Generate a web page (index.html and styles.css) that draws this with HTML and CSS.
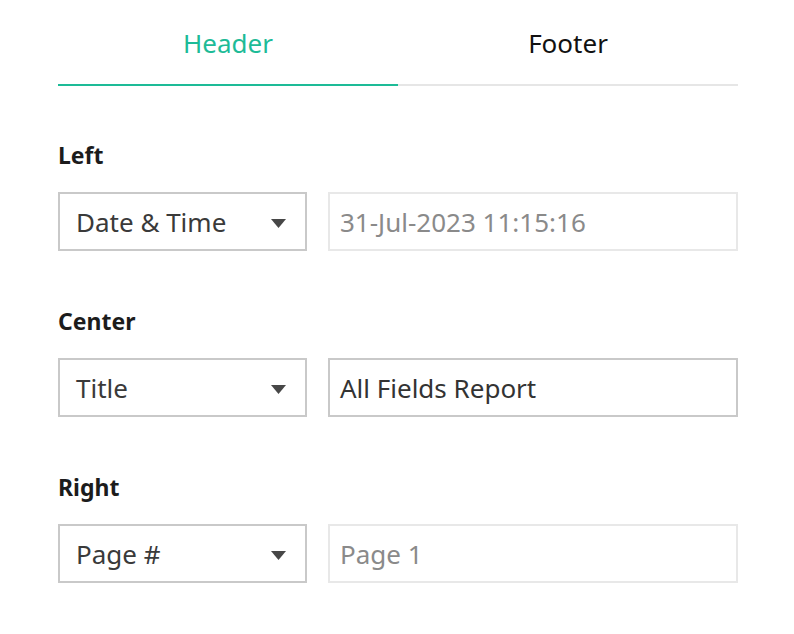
FILE: index.html
```html
<!DOCTYPE html>
<html lang="en">
<head>
<meta charset="utf-8">
<title>Header / Footer</title>
<link rel="stylesheet" href="styles.css">
</head>
<body>
<div class="panel">
  <div class="tabs">
    <div class="tab active">Header</div>
    <div class="tab">Footer</div>
  </div>

  <div class="section">
    <div class="label">Left</div>
    <div class="row">
      <div class="select"><span class="select-text">Date &amp; Time</span><svg class="caret" width="15" height="9" viewBox="0 0 15 9"><path d="M0 0H15L7.5 9Z" fill="#474747"/></svg></div>
      <div class="input disabled">31-Jul-2023 11:15:16</div>
    </div>
  </div>

  <div class="section">
    <div class="label">Center</div>
    <div class="row">
      <div class="select"><span class="select-text">Title</span><svg class="caret" width="15" height="9" viewBox="0 0 15 9"><path d="M0 0H15L7.5 9Z" fill="#474747"/></svg></div>
      <div class="input">All Fields Report</div>
    </div>
  </div>

  <div class="section">
    <div class="label">Right</div>
    <div class="row">
      <div class="select"><span class="select-text">Page #</span><svg class="caret" width="15" height="9" viewBox="0 0 15 9"><path d="M0 0H15L7.5 9Z" fill="#474747"/></svg></div>
      <div class="input disabled">Page 1</div>
    </div>
  </div>
</div>
</body>
</html>
```

FILE: styles.css
```css
html, body {
  margin: 0;
  padding: 0;
  background: #ffffff;
}

body {
  font-family: "Noto Sans", "Open Sans", sans-serif;
  color: #333333;
}

.panel {
  width: 680px;
  padding-left: 58px;
}

.tabs {
  display: flex;
}

.tab {
  flex: 1;
  text-align: center;
  font-size: 26px;
  line-height: 36px;
  padding-top: 25px;
  padding-bottom: 23px;
  border-bottom: 2px solid #e6e6e6;
  color: #111111;
}

.tab.active {
  color: #1dbb97;
  border-bottom-color: #1dbb97;
}

.section {
  margin-top: 54px;
}

.section + .section {
  margin-top: 55px;
}

.label {
  font-size: 23px;
  font-weight: 700;
  line-height: 30px;
  color: #1c1c1c;
  margin-bottom: 22px;
}

.row {
  display: flex;
  gap: 21px;
}

.select {
  box-sizing: border-box;
  width: 249px;
  height: 59px;
  border: 2px solid #c9c9c9;
  display: flex;
  align-items: center;
  justify-content: space-between;
  padding: 0 19px 0 16px;
  font-size: 26px;
  color: #3a3a3a;
}

.caret {
  display: block;
  margin-top: 3px;
}

.input {
  box-sizing: border-box;
  flex: 1;
  height: 59px;
  border: 2px solid #c9c9c9;
  display: flex;
  align-items: center;
  padding: 0 10px;
  font-size: 26px;
  color: #333333;
}

.input.disabled {
  border-color: #e8e8e8;
  color: #8a8a8a;
}
```
